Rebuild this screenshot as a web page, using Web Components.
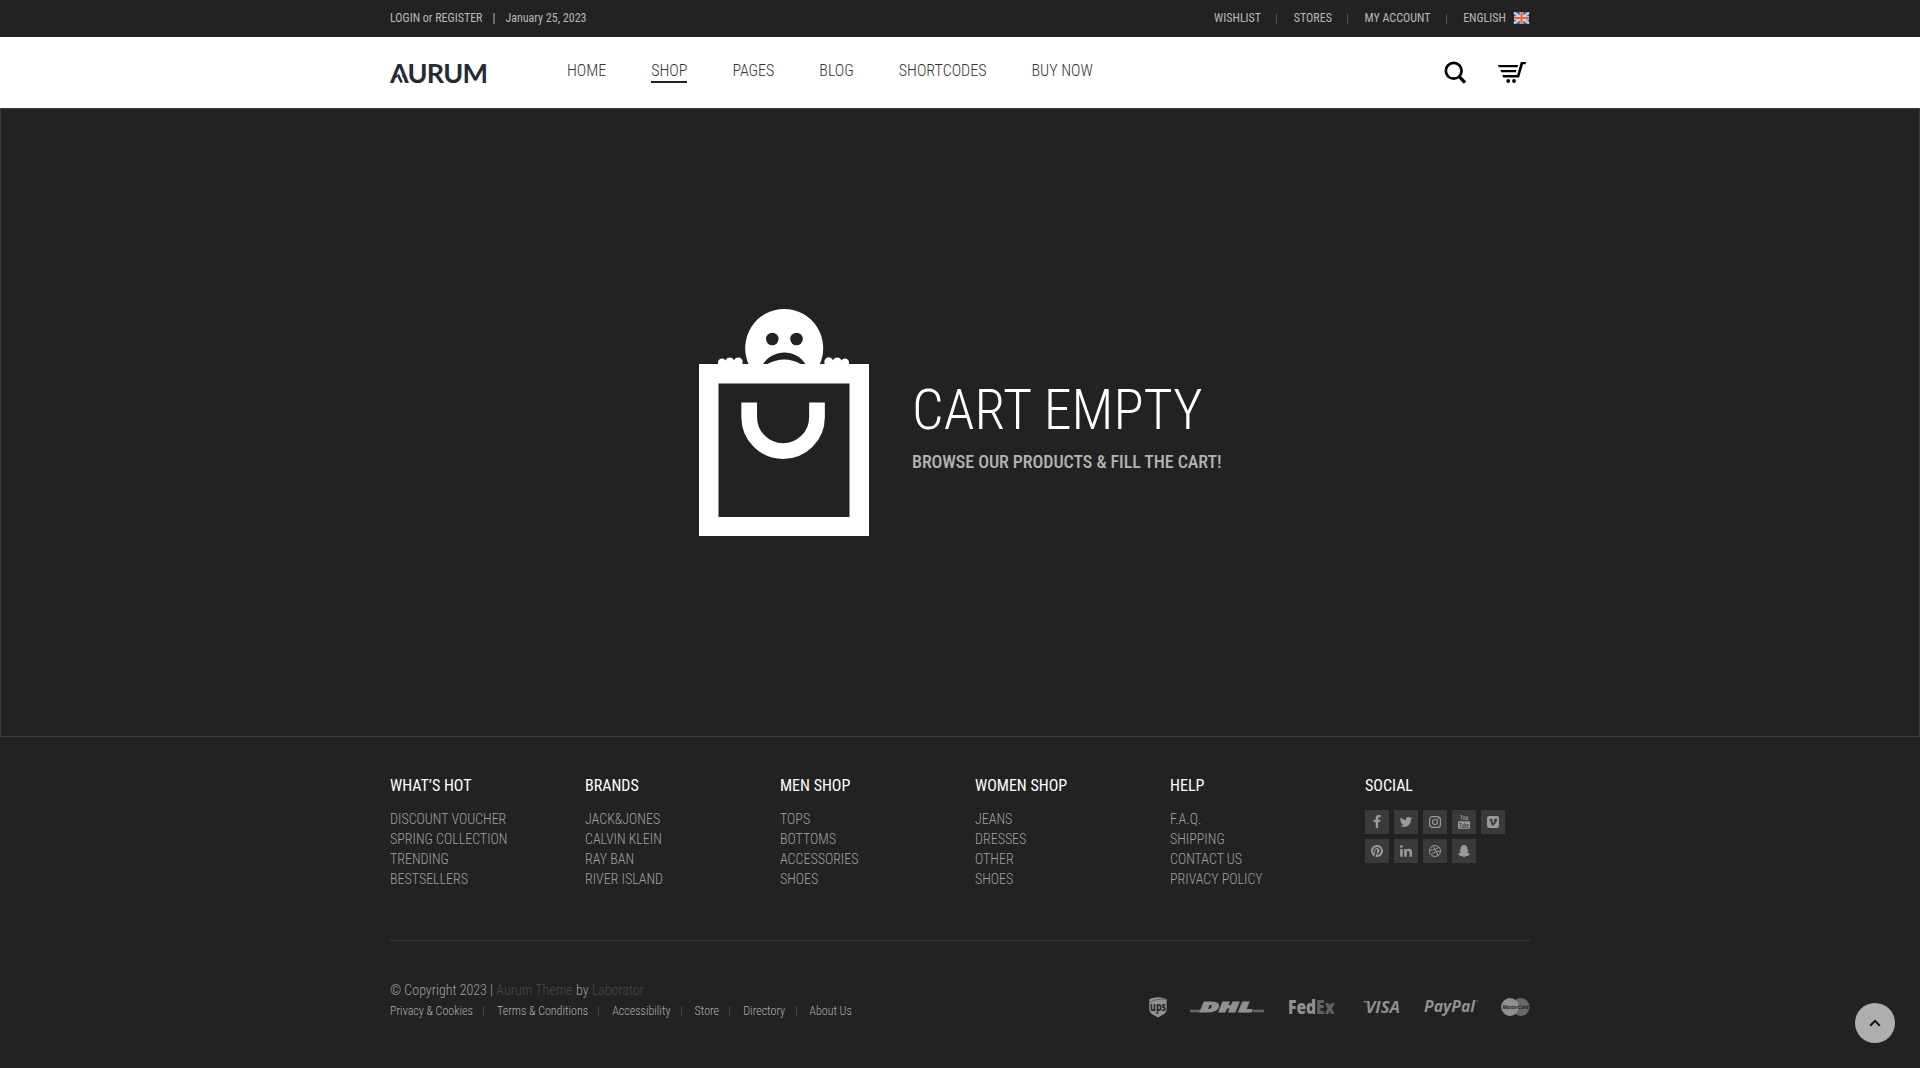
<!DOCTYPE html>
<html lang="en">
<head>
<meta charset="utf-8">
<title>Aurum – Cart</title>
<style>
html,body{margin:0;background:#222}
body{font-family:"Roboto Condensed",Roboto,"Liberation Sans",sans-serif;font-stretch:75%;width:1920px;height:1068px;overflow:hidden}
</style>
</head>
<body>
<aurum-page></aurum-page>
<script>
const define=(name,css,html)=>customElements.define(name,class extends HTMLElement{
  constructor(){
    super();
    const t=document.createElement('template');
    t.innerHTML='<style>*{box-sizing:border-box}svg{display:block;overflow:visible;flex:none}'+css+'</style>'+(typeof html==='function'?html(this):html);
    this.attachShadow({mode:'open'}).append(t.content.cloneNode(true));
  }
});

define('top-bar',`
:host{display:block;height:37px;background:#222;color:#b8b8b8;font-size:12px;line-height:36px}
.in{width:1140px;margin:0 auto;display:flex;justify-content:space-between;white-space:nowrap}
.l{display:flex}.l i{font-style:normal;margin:0 10px 0 10px}
.r{display:flex;align-items:center;padding-right:1px}
.r i{width:1px;height:10px;background:#555;margin:2px 16.500px 0 15.200px}
.r svg{margin-left:8px;margin-top:0}`,
`<div class="in"><div class="l"><span>LOGIN or REGISTER</span><i>|</i><span>January 25, 2023</span></div>
<div class="r"><span>WISHLIST</span><i></i><span>STORES</span><i></i><span>MY ACCOUNT</span><i></i><span>ENGLISH</span>
<svg width="15" height="12" viewBox="0 0 15 12"><rect width="15" height="12" fill="#2474c6"/><path d="M0 .6L15 11.400M15 .6L0 11.400" stroke="#f3e9e4" stroke-width="2"/><path d="M0 .6L15 11.400M15 .6L0 11.400" stroke="#ef8d76" stroke-width=".7"/><path d="M7.500 0V12M0 6H15" stroke="#f7d9cf" stroke-width="3.400"/><path d="M7.500 0V12M0 6H15" stroke="#f4623f" stroke-width="2.200"/></svg></div></div>`);

define('site-logo',`:host{display:block;width:98px;height:24px}text{font-family:Lato,"Liberation Sans",sans-serif;font-weight:700;font-size:27px;font-stretch:100%}`,
`<svg width="98" height="24" viewBox="0 0 98 24"><text x="0" y="20.500" fill="#252a33" textLength="98" lengthAdjust="spacing">AURUM</text>
<path d="M4.600 21.500L9.500 7L15 21.500z" fill="#fff"/><path d="M7.800 12.500L11.600 20.500" stroke="#252a33" stroke-width="2.600"/></svg>`);

define('nav-link',`:host{display:block;height:22px;line-height:20px}:host([active]){box-shadow:inset 0 -2px #222}`,`<slot></slot>`);

define('nav-bar',`
:host{display:block;height:71px;background:#fff;color:#333;font-size:16px;font-weight:300}
.in{width:1140px;height:71px;margin:0 auto;display:flex;align-items:flex-start;white-space:nowrap}
site-logo{margin-top:25px}
nav{display:flex;gap:45px;margin:24px auto 0 79px}
.s{margin:24px 0 0}.c{margin:25px 3px 0 31px}`,
`<div class="in"><site-logo></site-logo>
<nav><nav-link>HOME</nav-link><nav-link active>SHOP</nav-link><nav-link>PAGES</nav-link><nav-link>BLOG</nav-link><nav-link>SHORTCODES</nav-link><nav-link>BUY NOW</nav-link></nav>
<svg class="s" width="23" height="23" viewBox="0 0 23 23" fill="none" stroke="#000"><circle cx="9.700" cy="9.800" r="7.900" stroke-width="2.700"/><path d="M15.500 15.800L21 21.600" stroke-width="3.300"/></svg>
<svg class="c" width="29" height="22" viewBox="0 0 29 22"><path d="M0 3H20.200L19.500 5.300H.8zM2.300 8H18.500L17.800 10.300H3.400zM4.300 13H19.200L22.800 0H28.300L27.400 2.300H25L21.100 15.500H5.200z"/><circle cx="10.200" cy="19" r="1.900"/><circle cx="16" cy="19" r="1.900"/></svg></div>`);

define('empty-cart',`
:host{display:flex;height:629px;border:1px solid #3a3a3a;padding:200px 0 0 698px;align-items:flex-start;white-space:nowrap}
.t{margin-left:43px;padding-top:66px}
h1{margin:0;font-weight:300;font-size:56px;line-height:70px;color:#fff}
p{margin:0;padding-top:6px;font-size:18px;font-weight:500;line-height:22px;color:#b3b3b3;letter-spacing:-.08px}`,
`<svg width="170" height="227" viewBox="0 0 170 227"><g fill="#fff">
<path d="M0 55H170V227H0zM19.500 74.500V208H150.500V74.500z" fill-rule="evenodd"/>
<path d="M50 56A39 39.200 0 1 1 120.400 56z"/>
<path d="M19 56V54A4 4 0 0 1 26.500 51.600A4.500 4.500 0 0 1 35 51.600A4.200 4.200 0 0 1 43.500 54V56zM125.500 56V54A4.200 4.200 0 0 1 134 51.600A4.500 4.500 0 0 1 142.500 51.600A4 4 0 0 1 150 54V56z"/></g>
<g fill="#222"><circle cx="73.300" cy="30" r="6.300"/><circle cx="97.500" cy="30" r="6.300"/>
<path d="M64 55C74 39.500 97 39.500 106.500 55H101.500C92 49 79 49 68.500 55z"/></g>
<path d="M50.200 93.500V108.200A33.900 33.900 0 0 0 118 108.200V93.500" fill="none" stroke="#fff" stroke-width="15.700"/></svg>
<div class="t"><h1>CART EMPTY</h1><p>BROWSE OUR PRODUCTS &amp; FILL THE CART!</p></div>`);

define('link-column',`
:host{display:block;flex:none;width:195px;white-space:nowrap}
h2{margin:0;font-size:16px;font-weight:370;line-height:20px;color:#fff}
.b{padding-top:13px;font-size:14px;font-weight:300;line-height:20px;color:#a0a0a0}
a{display:block}`,
el=>`<h2><slot name="title"></slot></h2><div class="b">${(el.getAttribute('items')||'').split('|').filter(Boolean).map(s=>`<a>${s.replace('&','&amp;')}</a>`).join('')}<slot></slot></div>`);

const fa=d=>`<svg viewBox="0 0 1792 1792" width="14" height="14" fill="#9a9a9a"><path d="${d}"/></svg>`;
const sv=b=>`<svg viewBox="0 0 14 14" width="14" height="14">${b}</svg>`;
const SOCIAL=[
fa('M1343 12v264h-157q-86 0-116 36t-30 108v189h293l-39 296h-254v759h-306v-759h-255v-296h255v-218q0-186 104-288.500t277-102.500q147 0 228 12z'),
fa('M1684 408q-67 98-162 167 1 14 1 42 0 130-38 259.500t-115.500 248.500-184.500 210.500-258 146-323 54.500q-271 0-496-145 35 4 78 4 225 0 401-138-105-2-188-64.500t-114-159.500q33 5 61 5 43 0 85-11-112-23-185.500-111.500t-73.500-205.500v-4q68 38 146 41-66-44-105-115t-39-154q0-88 44-163 121 149 294.500 238.500t371.500 99.500q-8-38-8-74 0-134 94.500-228.500t228.500-94.500q140 0 236 102 109-21 205-78-37 115-142 178 93-10 186-50z'),
sv('<rect x="1.600" y="1.600" width="10.800" height="10.800" rx="3" fill="none" stroke="#9a9a9a" stroke-width="1.200"/><circle cx="7" cy="7" r="2.500" fill="none" stroke="#9a9a9a" stroke-width="1.200"/><circle cx="10.200" cy="3.800" r=".7" fill="#9a9a9a"/>'),
sv('<text x="7" y="5" font-size="7" text-anchor="middle" fill="#9a9a9a" font-weight="500" textLength="8" lengthAdjust="spacingAndGlyphs">You</text><rect x="1" y="6.300" width="12" height="7.500" rx="1.300" fill="#9a9a9a"/><text x="7" y="12.700" font-size="7" text-anchor="middle" fill="#3a3a3a" font-weight="500" textLength="10" lengthAdjust="spacingAndGlyphs">Tube</text>'),
sv('<rect x="1" y="1" width="12" height="12" rx="2.200" fill="#9a9a9a"/><path d="M3 5.200L5 3.500C6.200 3.400 6.300 4.500 6.500 5.800C6.700 7.200 6.900 8.100 7.200 8.100C7.600 8.100 8.500 6.600 8.500 6C8.500 5.500 8.100 5.500 7.700 5.600C8.200 4 9.200 3.300 10.200 3.400C11.400 3.500 11.300 5 10.700 6.200C9.700 8.200 7.900 10.600 6.700 10.600C5.300 10.600 5.100 7.900 4.500 6.100C4.300 5.500 4 5.500 3.500 5.800z" fill="#3a3a3a"/>'),
fa('M1664 896q0 209-103 385.500t-279.500 279.500-385.500 103q-111 0-218-32 59-93 78-164 9-34 54-211 20 39 73 67.500t114 28.500q121 0 216-68.500t147-188.500 52-270q0-114-59.500-214t-172.500-163-255-63q-105 0-196 29t-154.500 77-109 110.500-67 129.500-21.500 134q0 104 40 183t117 111q30 12 38-20 2-7 8-31t8-30q6-23-11-43-51-61-51-151 0-151 104.500-259.500t273.500-108.500q151 0 235.500 82t84.500 213q0 170-68.500 289t-175.500 119q-61 0-98-43.500t-23-104.500q8-35 26.500-93.500t30-103 11.500-75.500q0-50-27-83t-77-33q-62 0-105 57t-43 142q0 73 25 122l-99 418q-17 70-13 177-206-91-333-281t-127-423q0-209 103-385.500t279.500-279.500 385.500-103 385.500 103 279.500 279.500 103 385.500z'),
fa('M477 625v991h-330v-991h330zm21-306q1 73-50.500 122t-135.500 49h-2q-82 0-132-49t-50-122q0-74 51.500-122.500t134.500-48.500 133 48.500 51 122.500zm1166 729v568h-329v-530q0-105-40.500-164.500t-126.500-59.500q-63 0-105.500 34.500t-63.500 85.500q-11 30-11 81v553h-329q2-399 2-647t-1-296l-1-48h329v144h-2q20-32 41-56t56.500-52 87-43.500 114.500-15.500q171 0 275 113.500t104 332.500z'),
sv('<g fill="none" stroke="#9a9a9a" stroke-width="1"><circle cx="7" cy="7" r="5.500"/><path d="M4.800 2Q9.300 7.300 9.900 11.700M1.500 6.400Q7.500 6.500 10.900 3.200M3.300 11Q6.300 6.700 12.500 7.600"/></g>'),
sv('<path d="M7 .9C9 .9 10.300 2.200 10.400 4.100L10.300 5.800C10.900 6 11.400 5.600 11.600 6.200C11.700 6.800 10.600 7 10.400 7.500C10.700 8.900 11.800 9.600 13.100 10C13.100 10.800 12.100 10.900 11.300 11.100C11.100 11.400 11.200 11.800 10.900 12C10 11.900 9.400 11.800 8.800 12.300C7.600 13.200 6.400 13.200 5.200 12.300C4.600 11.800 4 11.900 3.100 12C2.800 11.800 2.900 11.400 2.700 11.100C1.900 10.900 .9 10.800 .9 10C2.200 9.600 3.300 8.900 3.600 7.500C3.400 7 2.300 6.800 2.400 6.200C2.600 5.600 3.100 6 3.700 5.800L3.600 4.100C3.700 2.200 5 .9 7 .9z" fill="#9a9a9a"/>')];

define('social-links',`:host{display:flex;flex-wrap:wrap;gap:5px;width:145px;padding-top:1px}
span{width:24px;height:24px;background:#3a3a3a;display:flex;align-items:center;justify-content:center;line-height:1}`,
SOCIAL.map(s=>`<span>${s}</span>`).join(''));

define('payment-logos',`:host{display:flex;align-items:flex-start;height:24px}
text{font-family:"Open Sans","Liberation Sans",sans-serif;font-stretch:100%}`,
`<svg style="margin-right:22px" width="20" height="23" viewBox="0 0 20 23"><path d="M1.300 3.200C7 .5 13 .5 18.700 3.200V13C18.700 17.500 15 18.800 10 21.400C5 18.800 1.300 17.500 1.300 13z" fill="#909090"/><path d="M2.300 6.200C6 3.800 11 3 17.700 3.300" stroke="#555" stroke-width=".8" fill="none"/><text x="10" y="14.600" text-anchor="middle" font-size="12" font-weight="700" fill="#222" textLength="16" lengthAdjust="spacingAndGlyphs">ups</text></svg>
<svg style="margin:6px 24px 0 0" width="74" height="11" viewBox="0 0 74 11"><path d="M0 7.800H11L10 10.200H0zM63.500 7.800H74V10.200H62.500z" fill="#666"/><text x="10" y="10.100" font-size="13.500" font-weight="800" font-style="italic" fill="#909090" stroke="#909090" stroke-width="1" textLength="53" lengthAdjust="spacingAndGlyphs">DHL</text></svg>
<svg style="margin:3px 28px 0 0" width="47" height="17" viewBox="0 0 47 17"><text x="0" y="14.800" font-size="18.500" font-weight="800" fill="#909090" textLength="46.500" lengthAdjust="spacingAndGlyphs">Fed<tspan fill="#626262">Ex</tspan></text></svg>
<svg style="margin:4px 23px 0 0" width="38" height="14" viewBox="0 0 38 14"><text x="2.500" y="12.500" font-size="16" font-weight="700" font-style="italic" fill="#909090" textLength="34.500" lengthAdjust="spacingAndGlyphs">VISA</text><path d="M0 1.100H5L5.500 2.600H1z" fill="#777"/></svg>
<svg style="margin:2px 21px 0 0" width="56" height="20" viewBox="0 0 56 20"><text x="0" y="14" font-size="16" font-weight="700" font-style="italic" fill="#909090" textLength="51" lengthAdjust="spacingAndGlyphs">PayPal</text><path d="M52 3H54" stroke="#666"/></svg>
<svg style="margin-top:2px" width="29" height="18" viewBox="0 0 29 18"><circle cx="19.700" cy="9" r="8.900" fill="#686868"/><circle cx="9" cy="9" r="8.900" fill="#909090"/><text x="1.500" y="11" font-size="6" font-weight="700" font-style="italic" fill="#222" textLength="26" lengthAdjust="spacingAndGlyphs">MasterCard</text></svg>`);

define('site-footer',`
:host{display:block;width:1140px;margin:0 auto;white-space:nowrap}
.cols{display:flex;height:204px;padding-top:39px;border-bottom:1px solid #3a3a3a}
.bot{display:flex;justify-content:space-between;padding-top:39px;font-weight:300;color:#a0a0a0}
.c{font-size:14px;line-height:20px}.c b{font-weight:300;color:#484848}
.m{display:flex;align-items:center;font-size:12px;line-height:20px;color:#b0b0b0;padding-top:1px}
.m i{width:1px;height:10px;background:#444;margin:0 12.800px 0 10.400px}
payment-logos{margin-top:16px}`,
`<div class="cols">
<link-column items="DISCOUNT VOUCHER|SPRING COLLECTION|TRENDING|BESTSELLERS"><span slot="title">WHAT’S HOT</span></link-column>
<link-column items="JACK&JONES|CALVIN KLEIN|RAY BAN|RIVER ISLAND"><span slot="title">BRANDS</span></link-column>
<link-column items="TOPS|BOTTOMS|ACCESSORIES|SHOES"><span slot="title">MEN SHOP</span></link-column>
<link-column items="JEANS|DRESSES|OTHER|SHOES"><span slot="title">WOMEN SHOP</span></link-column>
<link-column items="F.A.Q.|SHIPPING|CONTACT US|PRIVACY POLICY"><span slot="title">HELP</span></link-column>
<link-column><span slot="title">SOCIAL</span><social-links></social-links></link-column></div>
<div class="bot"><div><div class="c">© Copyright 2023 | <b>Aurum Theme</b> by <b>Laborator</b></div>
<div class="m"><span>Privacy &amp; Cookies</span><i></i><span>Terms &amp; Conditions</span><i></i><span>Accessibility</span><i></i><span>Store</span><i></i><span>Directory</span><i></i><span>About Us</span></div></div>
<payment-logos></payment-logos></div>`);

define('back-to-top',`:host{position:absolute;right:25px;bottom:25px;width:40px;height:40px;border-radius:50%;background:#aeaeae;display:flex;align-items:center;justify-content:center}`,
`<svg width="12" height="8" viewBox="0 0 12 8"><path d="M1.200 6.700L6 1.900L10.800 6.700" fill="none" stroke="#111" stroke-width="2"/></svg>`);

define('aurum-page',`:host{display:block;position:relative;width:1920px;height:1068px}`,
`<top-bar></top-bar><nav-bar></nav-bar><empty-cart></empty-cart><site-footer></site-footer><back-to-top></back-to-top>`);
</script>
</body>
</html>
